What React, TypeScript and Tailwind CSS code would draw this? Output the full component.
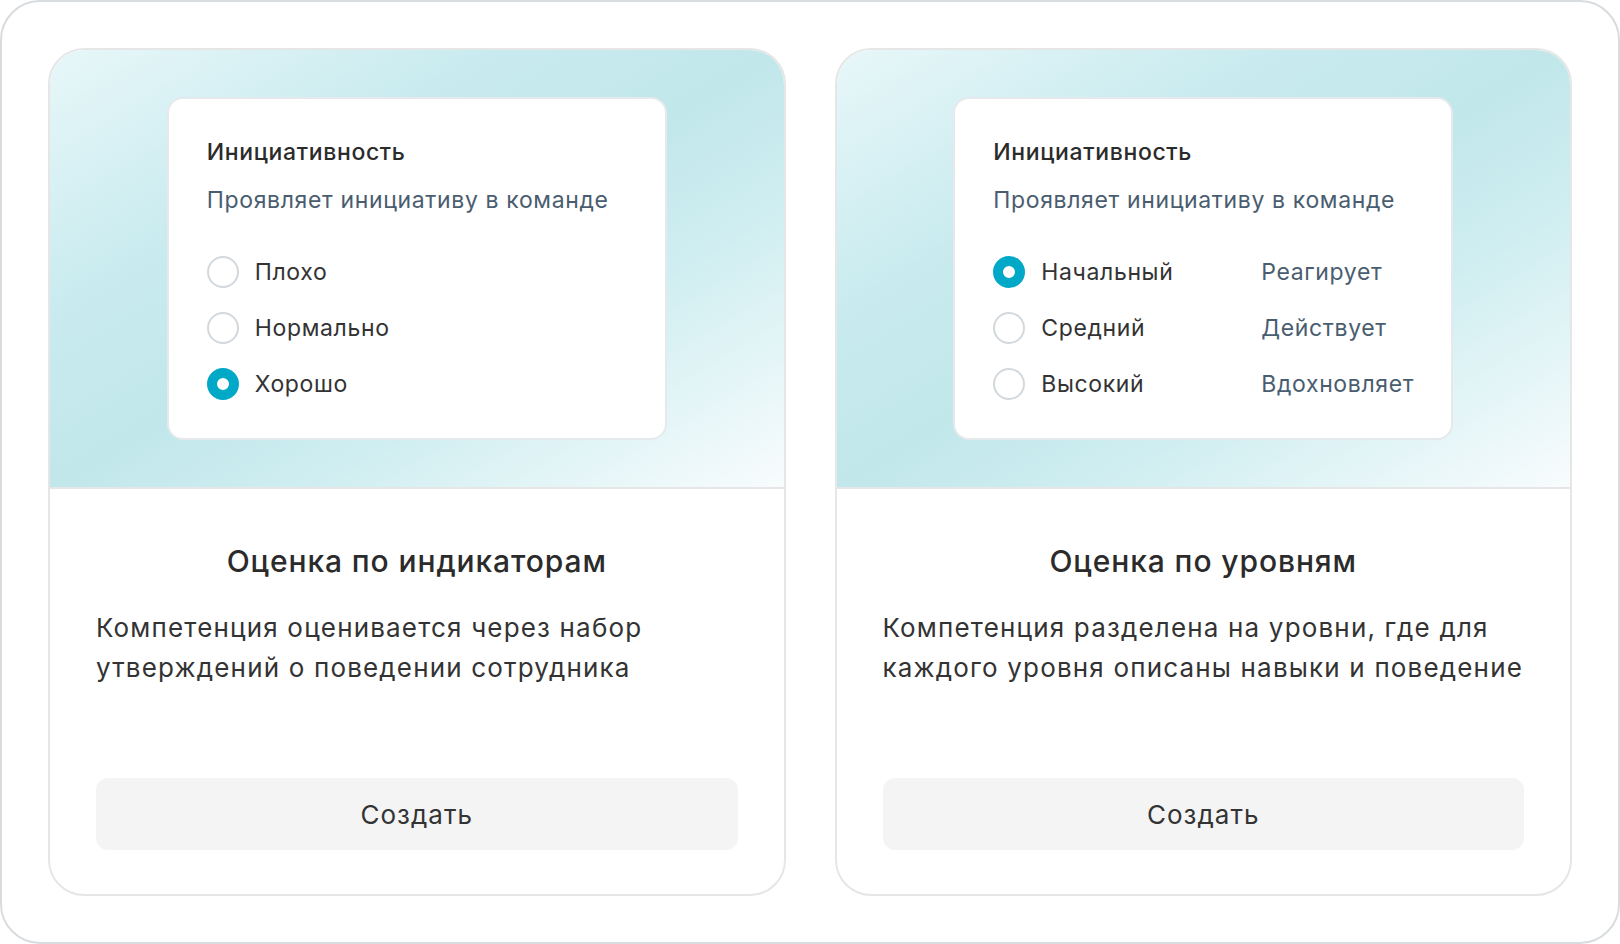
import React from 'react';

type Option = { label: string; hint?: string; checked?: boolean };

const indicatorOptions: Option[] = [
  { label: 'Плохо' },
  { label: 'Нормально' },
  { label: 'Хорошо', checked: true },
];

const levelOptions: Option[] = [
  { label: 'Начальный', hint: 'Реагирует', checked: true },
  { label: 'Средний', hint: 'Действует' },
  { label: 'Высокий', hint: 'Вдохновляет' },
];

function Radio({ checked }: { checked?: boolean }) {
  if (checked) {
    return <span className="w-8 h-8 shrink-0 rounded-full border-[10px] border-[#02a9c6] bg-white" />;
  }
  return <span className="w-8 h-8 shrink-0 rounded-full border-2 border-[#d3d8dd] bg-white" />;
}

function PreviewPanel({ options }: { options: Option[] }) {
  return (
    <div className="w-[500px] bg-white rounded-2xl border-2 border-[#e6e9eb] pt-[38px] pb-[38px] pl-[38px] pr-[24px] tracking-[0.04em]">
      <div className="text-[23px] leading-[30px] font-medium text-[#2b2b2b]">Инициативность</div>
      <div className="mt-[18px] text-[23px] leading-[30px] text-[#4a5d70]">Проявляет инициативу в команде</div>
      <div className="mt-[41px] flex flex-col gap-6">
        {options.map((o) => (
          <div key={o.label} className="flex items-center h-8">
            <Radio checked={o.checked} />
            <span className="ml-4 w-[220px] text-[23px] leading-[30px] text-[#333333]">{o.label}</span>
            {o.hint && <span className="text-[23px] leading-[30px] text-[#4a5d70]">{o.hint}</span>}
          </div>
        ))}
      </div>
    </div>
  );
}

function TemplateCard({ title, text, options }: { title: string; text: React.ReactNode; options: Option[] }) {
  return (
    <div className="flex-1 flex flex-col rounded-[36px] border-2 border-[#e6e6e6] bg-white overflow-hidden">
      <div className="flex justify-center py-[47px] border-b-2 border-[#e6e6e6] bg-[linear-gradient(to_bottom_right,#e8f7f9_0%,#c9ebef_30%,#c1e7eb_50%,#d0eef1_68%,#f8fcfd_100%)]">
        <PreviewPanel options={options} />
      </div>
      <div className="flex-1 flex flex-col px-[46px] pt-[52px] pb-[44px]">
        <div className="text-center text-[30px] leading-[40px] font-medium tracking-[0.03em] text-[#2b2b2b]">{title}</div>
        <div className="mt-[27px] text-[26px] leading-[40px] tracking-[0.045em] text-[#333333]">{text}</div>
        <button className="mt-auto h-[72px] w-full rounded-xl bg-[#f4f4f4] text-[26px] tracking-[0.04em] text-[#333333]">Создать</button>
      </div>
    </div>
  );
}

export default function App() {
  return (
    <div className="w-[1620px] h-[944px] bg-white" style={{ fontFamily: 'Inter, "Noto Sans", sans-serif' }}>
      <div className="h-full rounded-[40px] border-2 border-[#d8dcdf] p-[46px] flex gap-[49px]">
        <TemplateCard
          title="Оценка по индикаторам"
          text={<>Компетенция оценивается через набор<br />утверждений о поведении сотрудника</>}
          options={indicatorOptions}
        />
        <TemplateCard
          title="Оценка по уровням"
          text={<>Компетенция разделена на уровни, где для<br />каждого уровня описаны навыки и поведение</>}
          options={levelOptions}
        />
      </div>
    </div>
  );
}
